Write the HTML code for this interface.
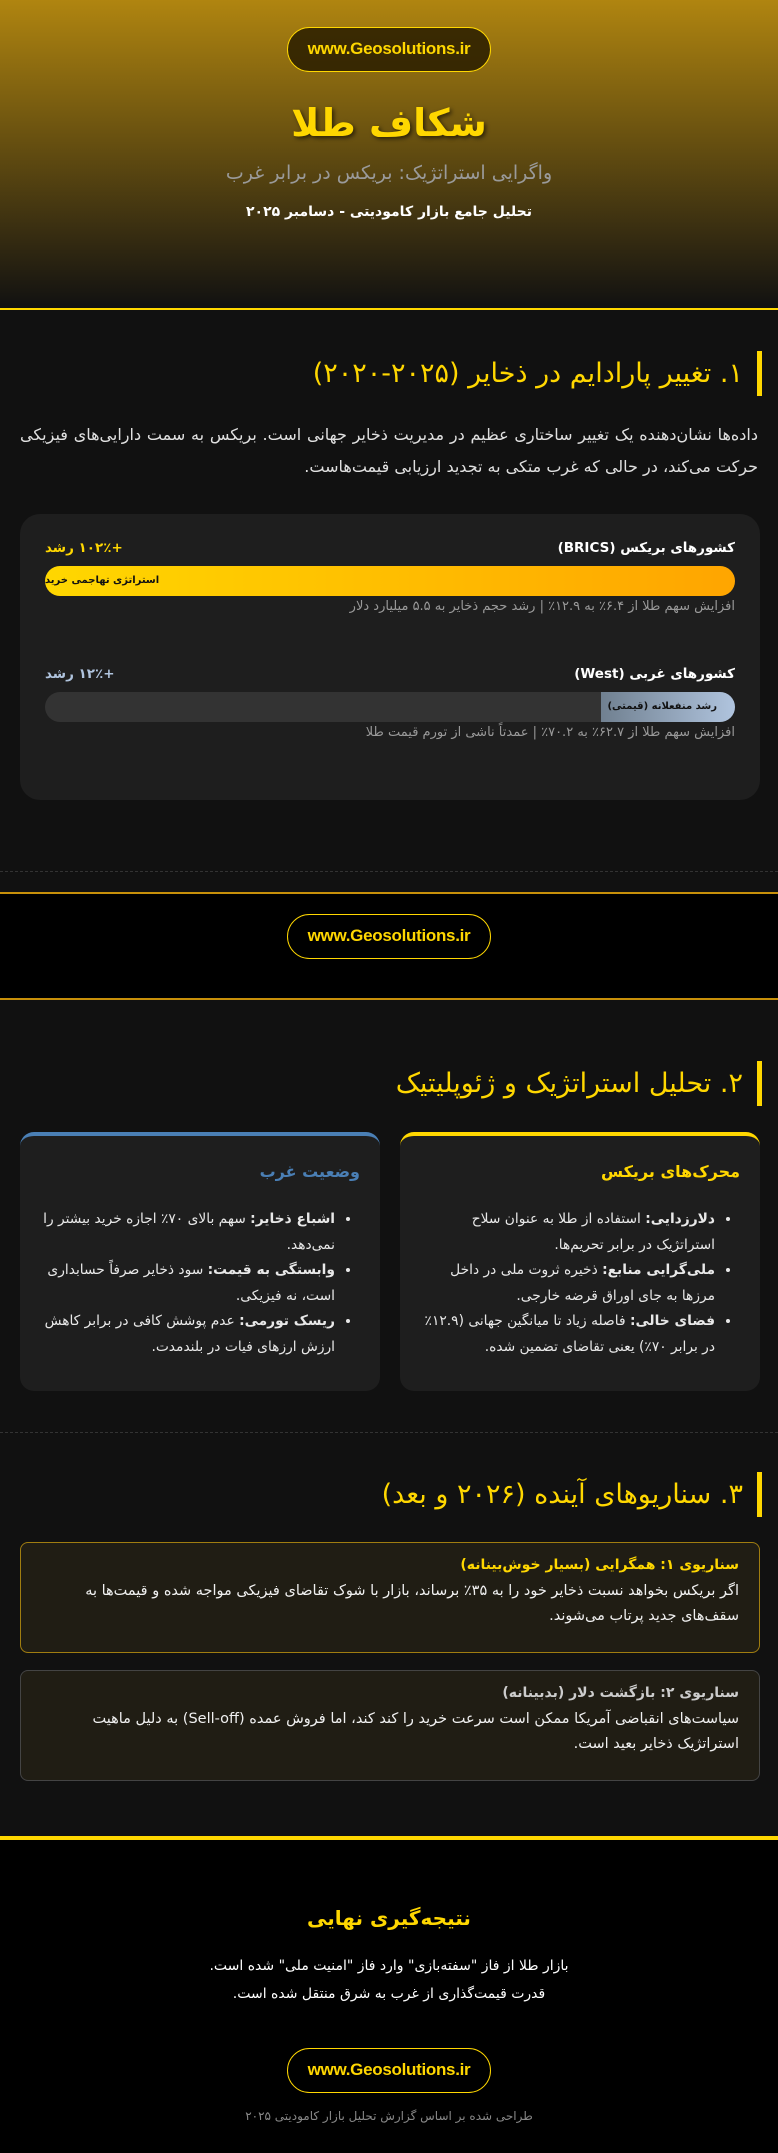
<!DOCTYPE html>
<html lang="fa" dir="rtl">
<head>
<meta charset="utf-8">
<style>
*{margin:0;padding:0;box-sizing:border-box}
body{width:778px;height:2153px;background:#111;color:#e0e0e0;font-family:"DejaVu Sans","Liberation Sans",sans-serif;overflow:hidden}
.btn{display:block;width:204px;height:45px;margin:0 auto;border:1.5px solid #ffd700;border-radius:23px;color:#ffd700;font-family:"Liberation Sans",sans-serif;font-weight:bold;font-size:17px;line-height:42px;text-align:center;direction:ltr;letter-spacing:-0.3px}
header{height:310px;background:linear-gradient(#b08510,#111);text-align:center;padding-top:27px;border-bottom:2px solid #ffd700}
header .btn{background:rgba(40,28,0,.85)}
h1{color:#ffd700;font-size:38px;font-weight:bold;margin-top:26px;text-shadow:2px 2px 4px rgba(0,0,0,.6);line-height:50px}
.sub{color:#9a9a9a;font-size:19px;margin-top:14px}
.date{color:#fff;font-weight:bold;font-size:14px;margin-top:20px}
h2{color:#ffd700;font-weight:normal;font-size:27px;border-right:5px solid #ffd700;padding-right:14px;height:45px;line-height:45px;margin-right:16px}
.sec{position:absolute;left:0;width:778px}
p.lead{font-size:16px;line-height:32px;text-align:justify;padding:0 20px;color:#e0e0e0}
.card{background:#1e1e1e;border-radius:20px}
.row{display:flex;justify-content:space-between;font-weight:bold;font-size:13.5px;color:#fff}
.bar{height:30px;border-radius:15px;background:#333;margin-top:10px;position:relative;overflow:hidden}
.note{font-size:13px;color:#999;margin-top:3px}
.dash{position:absolute;left:0;width:778px;border-top:1px dashed #333}
.col{position:absolute;top:0;width:360px;height:259px;background:#1e1e1e;border-radius:14px;padding:26px 20px}
.col h3{font-size:16px;margin-bottom:26px;padding-right:0}
.col ul{padding-right:25px;font-size:13.8px;line-height:25.5px;color:#e8e8e8}
.col li{margin:0}
.sc{position:absolute;left:20px;width:740px;border-radius:8px;padding:14px 20px;background:#201d14}
.sc h4{font-size:14px;margin-bottom:6px}
.sc p{font-size:14.5px;line-height:25px;color:#f0f0f0}
</style>
</head>
<body>
<header>
<div class="btn">www.Geosolutions.ir</div>
<h1>شکاف طلا</h1>
<div class="sub">واگرایی استراتژیک: بریکس در برابر غرب</div>
<div class="date">تحلیل جامع بازار کامودیتی - دسامبر ۲۰۲۵</div>
</header>

<div class="sec" style="top:351px"><h2>۱. تغییر پارادایم در ذخایر (۲۰۲۵-۲۰۲۰)</h2></div>
<div class="sec" style="top:419px"><p class="lead">داده‌ها نشان‌دهنده یک تغییر ساختاری عظیم در مدیریت ذخایر جهانی است. بریکس به سمت دارایی‌های فیزیکی حرکت می‌کند، در حالی که غرب متکی به تجدید ارزیابی قیمت‌هاست.</p></div>

<div class="sec card" style="top:514px;left:20px;width:740px;height:286px;padding:26px 25px">
 <div class="row"><span>کشورهای بریکس (BRICS)</span><span style="color:#ffd700">+۱۰۲٪ رشد</span></div>
 <div class="bar" style="background:linear-gradient(to left,#ffa500,#ffd700)"><span style="position:absolute;left:0;top:0;line-height:30px;font-size:10px;font-weight:bold;color:#111">استراتژی تهاجمی خرید</span></div>
 <div class="note">افزایش سهم طلا از ۶.۴٪ به ۱۲.۹٪ | رشد حجم ذخایر به ۵.۵ میلیارد دلار</div>
 <div class="row" style="margin-top:52px"><span>کشورهای غربی (West)</span><span style="color:#b0c4de">+۱۲٪ رشد</span></div>
 <div class="bar"><div style="position:absolute;right:0;top:0;height:30px;width:134px;background:linear-gradient(to left,#b0c4de,#708090);font-size:10px;font-weight:bold;color:#111;line-height:30px;padding-right:18px">رشد منفعلانه (قیمتی)</div></div>
 <div class="note">افزایش سهم طلا از ۶۲.۷٪ به ۷۰.۲٪ | عمدتاً ناشی از تورم قیمت طلا</div>
</div>

<div class="dash" style="top:871px"></div>
<div class="sec" style="top:892px;height:108px;background:#000;border-top:2px solid #c8900a;border-bottom:2px solid #c8900a;padding-top:20px"><div class="btn">www.Geosolutions.ir</div></div>

<div class="sec" style="top:1061px"><h2>۲. تحلیل استراتژیک و ژئوپلیتیک</h2></div>
<div class="sec" style="top:1132px;height:260px">
 <div class="col" style="right:18px;border-top:4px solid #ffd700">
  <h3 style="color:#ffd700">محرک‌های بریکس</h3>
  <ul><li><b>دلارزدایی:</b> استفاده از طلا به عنوان سلاح استراتژیک در برابر تحریم‌ها.</li><li><b>ملی‌گرایی منابع:</b> ذخیره ثروت ملی در داخل مرزها به جای اوراق قرضه خارجی.</li><li><b>فضای خالی:</b> فاصله زیاد تا میانگین جهانی (۱۲.۹٪ در برابر ۷۰٪) یعنی تقاضای تضمین شده.</li></ul>
 </div>
 <div class="col" style="left:20px;border-top:4px solid #4a7fb5">
  <h3 style="color:#4a7fb5">وضعیت غرب</h3>
  <ul><li><b>اشباع ذخایر:</b> سهم بالای ۷۰٪ اجازه خرید بیشتر را نمی‌دهد.</li><li><b>وابستگی به قیمت:</b> سود ذخایر صرفاً حسابداری است، نه فیزیکی.</li><li><b>ریسک تورمی:</b> عدم پوشش کافی در برابر کاهش ارزش ارزهای فیات در بلندمدت.</li></ul>
 </div>
</div>

<div class="dash" style="top:1432px"></div>
<div class="sec" style="top:1472px"><h2>۳. سناریوهای آینده (۲۰۲۶ و بعد)</h2></div>
<div class="sc" style="top:1542px;height:111px;border:1px solid #a07d10">
 <h4 style="color:#ffd700">سناریوی ۱: همگرایی (بسیار خوش‌بینانه)</h4>
 <p>اگر بریکس بخواهد نسبت ذخایر خود را به ۳۵٪ برساند، بازار با شوک تقاضای فیزیکی مواجه شده و قیمت‌ها به سقف‌های جدید پرتاب می‌شوند.</p>
</div>
<div class="sc" style="top:1670px;height:111px;border:1px solid #444">
 <h4 style="color:#ccc">سناریوی ۲: بازگشت دلار (بدبینانه)</h4>
 <p>سیاست‌های انقباضی آمریکا ممکن است سرعت خرید را کند کند، اما فروش عمده (Sell-off) به دلیل ماهیت استراتژیک ذخایر بعید است.</p>
</div>

<div class="sec" style="top:1836px;height:317px;background:#000;border-top:4px solid #ffd700;text-align:center">
 <div style="color:#ffd700;font-weight:bold;font-size:20px;margin-top:66px">نتیجه‌گیری نهایی</div>
 <div style="color:#fff;font-size:14px;line-height:28px;margin-top:22px">بازار طلا از فاز "سفته‌بازی" وارد فاز "امنیت ملی" شده است.<br>قدرت قیمت‌گذاری از غرب به شرق منتقل شده است.</div>
 <div class="btn" style="margin-top:40px">www.Geosolutions.ir</div>
 <div style="color:#888;font-size:12px;margin-top:16px">طراحی شده بر اساس گزارش تحلیل بازار کامودیتی ۲۰۲۵</div>
</div>
</body>
</html>
